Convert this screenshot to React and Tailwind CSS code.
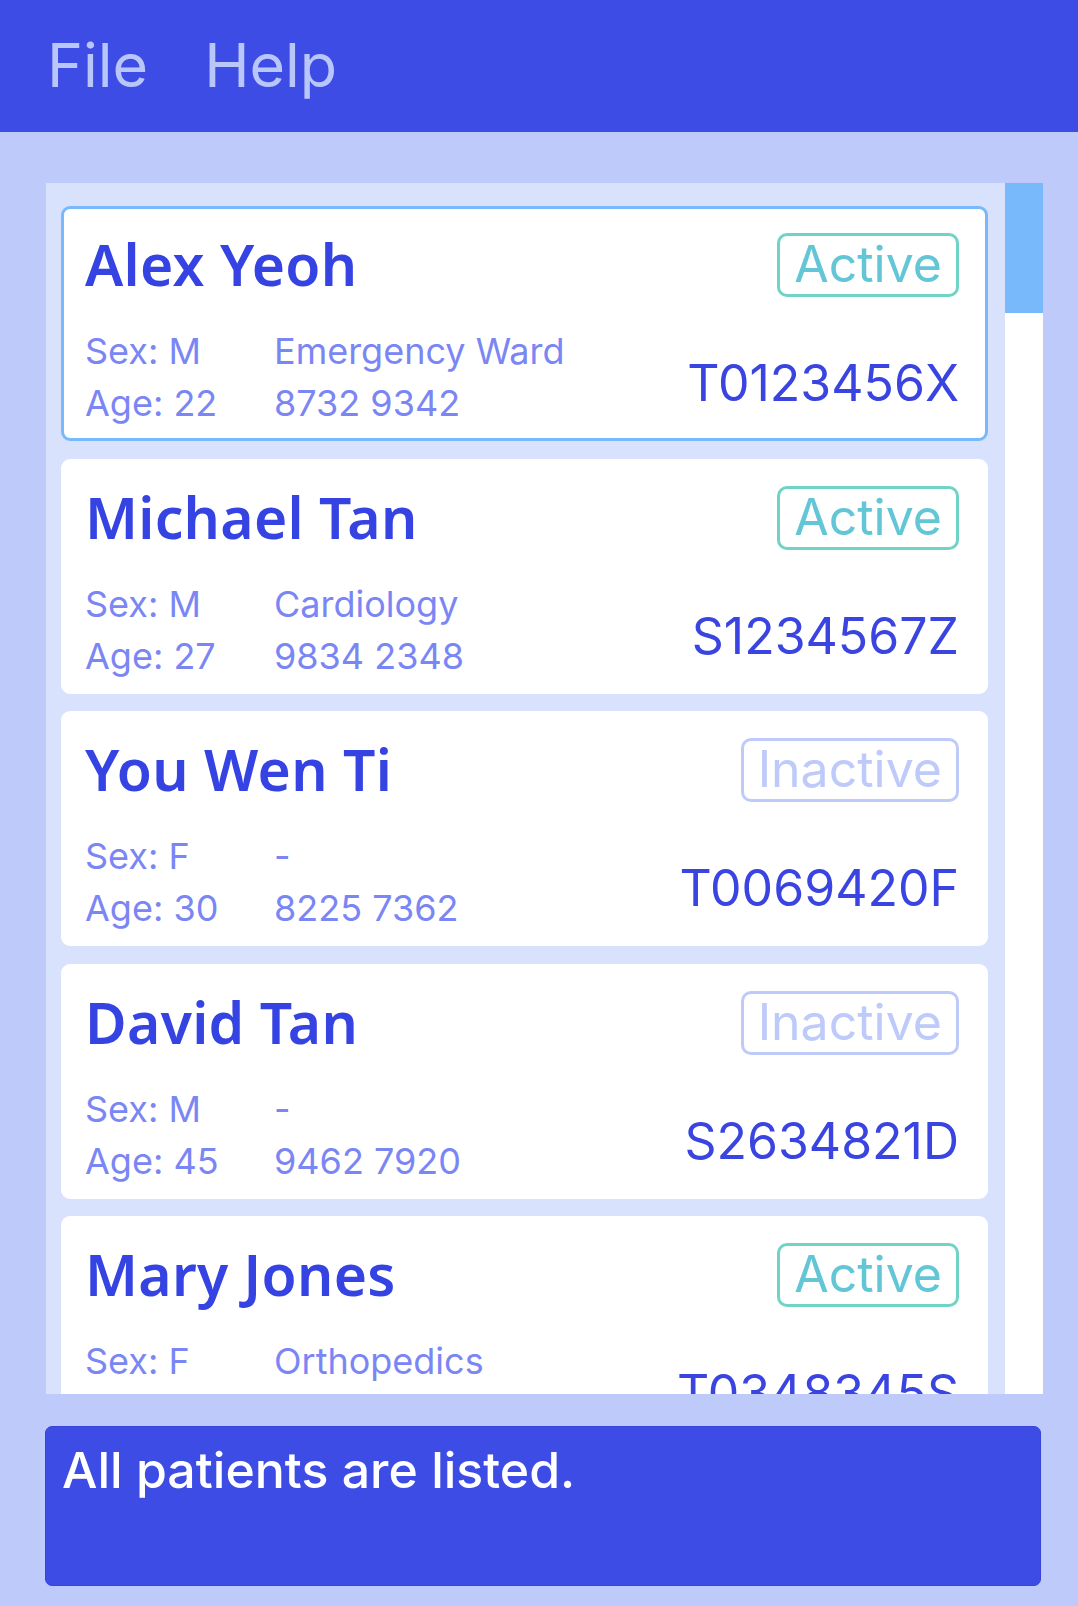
const PATIENTS = [
  { name: 'Alex Yeoh', sex: 'M', age: 22, ward: 'Emergency Ward', phone: '8732 9342', nric: 'T0123456X', active: true },
  { name: 'Michael Tan', sex: 'M', age: 27, ward: 'Cardiology', phone: '9834 2348', nric: 'S1234567Z', active: true },
  { name: 'You Wen Ti', sex: 'F', age: 30, ward: '-', phone: '8225 7362', nric: 'T0069420F', active: false },
  { name: 'David Tan', sex: 'M', age: 45, ward: '-', phone: '9462 7920', nric: 'S2634821D', active: false },
  { name: 'Mary Jones', sex: 'F', age: 52, ward: 'Orthopedics', phone: '9123 4567', nric: 'T0348345S', active: true },
]

function PatientCard({ p, selected }) {
  return (
    <div
      className={`flex justify-between bg-white rounded-[9px] border-[3px] pl-[21px] pr-[26px] pt-[25px] pb-[9px] ${
        selected ? 'border-[#78b9fb]' : 'border-white'
      }`}
    >
      <div>
        <div className="text-[57px] leading-[60px] font-semibold tracking-[0.3px] text-[#3643e3] font-['Noto_Sans',sans-serif]">
          {p.name}
        </div>
        <div className="mt-[31px] grid grid-cols-[189px_auto] text-[36px] leading-[52px] text-[#7b86f5]">
          <span>Sex: {p.sex}</span>
          <span>{p.ward}</span>
          <span>Age: {p.age}</span>
          <span>{p.phone}</span>
        </div>
      </div>
      <div className="flex flex-col items-end">
        <div
          className={`mt-[-1px] h-[64px] rounded-[10px] border-[3px] px-[14px] text-[50px] leading-[57px] ${
            p.active ? 'border-[#6fd4c6] text-[#62c6d6]' : 'border-[#bdcafa] text-[#bdcafa]'
          }`}
        >
          {p.active ? 'Active' : 'Inactive'}
        </div>
        <div className="mt-[61px] text-[50px] leading-[50px] text-[#3a44e0]">{p.nric}</div>
      </div>
    </div>
  )
}

export default function App() {
  return (
    <div className="w-[1078px] h-[1606px] flex flex-col bg-[#bdcafa] font-['Inter',sans-serif] overflow-hidden">
      <div className="h-[132px] flex items-center gap-[56px] bg-[#3e4ce6] pl-[47px] text-[61px] text-[#b9c6fa]">
        <span>File</span>
        <span>Help</span>
      </div>

      <div className="flex-1 flex flex-col pl-[46px] pr-[35px] pt-[51px] pb-[20px]">
        <div className="h-[1211px] flex">
          <div className="flex-1 bg-[#d9e2fd] overflow-hidden pt-[23px] pl-[15px] pr-[17px] flex flex-col gap-[17.5px]">
            {PATIENTS.map((p, i) => (
              <PatientCard key={p.nric} p={p} selected={i === 0} />
            ))}
          </div>
          <div className="w-[38px] bg-white">
            <div className="h-[130px] bg-[#78b9fb]" />
          </div>
        </div>

        <div className="mt-[32px] h-[160px] ml-[-1px] mr-[2px] rounded-[7px] border border-[#3843dc] bg-[#3e4ce6] pl-[16px] pt-[18px] text-[50px] leading-[50px] font-medium text-white">
          All patients are listed.
        </div>
      </div>
    </div>
  )
}
